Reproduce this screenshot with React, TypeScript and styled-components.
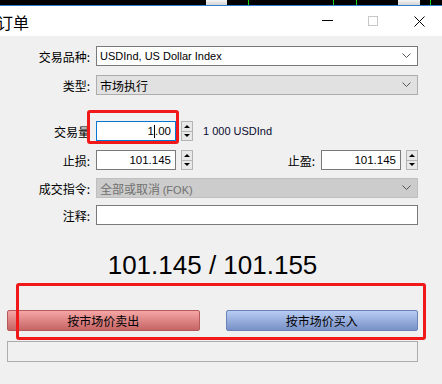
import styled, { createGlobalStyle } from 'styled-components';

const GlobalStyle = createGlobalStyle`
	html, body {
		margin: 0;
		padding: 0;
		background: #f0f0f0;
	}
	body {
		font-family: 'Liberation Sans', 'Noto Sans CJK SC', sans-serif;
		font-size: 12px;
		color: #000;
	}
`;

const Page = styled.div`
	position: relative;
	width: 442px;
	height: 384px;
	overflow: hidden;
	background: #f0f0f0;
`;

const Strip = styled.div`
	height: 5px;
	background: #000;
	border-bottom: 1px solid #2f7fd0;
	display: flex;
`;

const StripItem = styled.div<{ w: number; kind: 'gap' | 'green' | 'gray' }>`
	flex: none;
	width: ${(p) => p.w}px;
	height: 5px;
	background: ${(p) =>
		p.kind === 'green' ? '#18d418' : p.kind === 'gray' ? 'linear-gradient(#f4f4f4, #d4d4d4)' : 'transparent'};
`;

const TitleBar = styled.div`
	height: 30px;
	background: #fff;
	display: flex;
	align-items: center;
`;

const Title = styled.div`
	flex: 1;
	margin-left: -3px;
	font-family: 'Noto Sans CJK SC', sans-serif;
	font-size: 16px;
	line-height: 30px;
	padding-top: 1px;
`;

const WinButton = styled.div`
	width: 46px;
	height: 30px;
	display: flex;
	align-items: center;
	justify-content: center;
`;

const Body = styled.div`
	padding: 10px 24px 0 7px;
	display: flex;
	flex-direction: column;
`;

const Row = styled.div<{ mt?: number }>`
	display: flex;
	align-items: center;
	height: 20px;
	margin-top: ${(p) => p.mt ?? 0}px;
`;

const Label = styled.div<{ w?: number }>`
	width: ${(p) => p.w ?? 83}px;
	padding-right: 6px;
	text-align: right;
	font-family: 'Noto Sans CJK SC', sans-serif;
	font-size: 12px;
	flex: none;
`;

const SelectBox = styled.div<{ variant: 'white' | 'gray' | 'disabled' }>`
	flex: 1;
	height: 20px;
	box-sizing: border-box;
	display: flex;
	align-items: center;
	padding: 0 6px 0 3px;
	border: 1px solid ${(p) => (p.variant === 'white' ? '#7a7a7a' : p.variant === 'gray' ? '#adadad' : '#bfbfbf')};
	background: ${(p) => (p.variant === 'white' ? '#fff' : p.variant === 'gray' ? '#e1e1e1' : '#cccccc')};
	color: ${(p) => (p.variant === 'disabled' ? '#707070' : '#000')};
	font-size: 11px;
`;

const SelectText = styled.span<{ cjk?: boolean }>`
	flex: 1;
	font-size: ${(p) => (p.cjk ? 12 : 11)}px;
	font-family: ${(p) => (p.cjk ? "'Noto Sans CJK SC', sans-serif" : "'Liberation Sans', sans-serif")};
`;

const Latin = styled.span`
	font-family: 'Liberation Sans', sans-serif;
	font-size: 11px;
`;

const NumInput = styled.div<{ focused?: boolean }>`
	width: 80px;
	height: 20px;
	box-sizing: border-box;
	border: 1px solid ${(p) => (p.focused ? '#0078d7' : '#7a7a7a')};
	background: #fff;
	display: flex;
	align-items: center;
	justify-content: flex-end;
	padding-right: 4px;
	font-size: 11.5px;
	flex: none;
`;

const Caret = styled.span`
	display: inline-block;
	width: 1px;
	height: 13px;
	background: #000;
	vertical-align: middle;
`;

const Spinner = styled.div`
	width: 12px;
	height: 20px;
	margin-left: 5px;
	box-sizing: border-box;
	border: 1px solid #b4b4b4;
	background: #e8e8e8;
	display: flex;
	flex-direction: column;
	flex: none;
`;

const SpinHalf = styled.div<{ down?: boolean }>`
	flex: 1;
	display: flex;
	align-items: center;
	justify-content: center;
	border-top: ${(p) => (p.down ? '1px solid #b4b4b4' : 'none')};
	&::after {
		content: '';
		border-left: 3px solid transparent;
		border-right: 3px solid transparent;
		${(p) => (p.down ? 'border-top: 3px solid #000;' : 'border-bottom: 3px solid #000;')}
	}
`;

const Note = styled.span`
	margin-left: 10px;
	font-size: 11px;
	color: #0a0a30;
`;

const Spacer = styled.div`
	flex: 1;
`;

const TextInput = styled.div`
	flex: 1;
	height: 20px;
	box-sizing: border-box;
	border: 1px solid #7a7a7a;
	background: #fff;
`;

const Price = styled.div`
	margin-top: 25px;
	text-align: center;
	font-size: 26px;
	line-height: 30px;
	color: #000;
`;

const ButtonRow = styled.div`
	display: flex;
	gap: 26px;
	margin-top: 30px;
`;

const TradeButton = styled.div<{ side: 'sell' | 'buy' }>`
	flex: 1;
	height: 21px;
	box-sizing: border-box;
	border: 1px solid ${(p) => (p.side === 'sell' ? '#b45a5a' : '#6a82b8')};
	border-radius: 2px;
	background: ${(p) =>
		p.side === 'sell' ? 'linear-gradient(#f6a6a6, #c66464)' : 'linear-gradient(#b8cdf4, #7890c6)'};
	display: flex;
	align-items: center;
	justify-content: center;
	font-family: 'Noto Sans CJK SC', sans-serif;
	font-size: 12px;
	color: #000;
`;

const StatusBox = styled.div`
	margin-top: 10px;
	height: 21px;
	box-sizing: border-box;
	border: 1px solid #adadad;
	background: #f0f0f0;
`;

const Highlight = styled.div<{ x: number; y: number; w: number; h: number }>`
	position: absolute;
	left: ${(p) => p.x}px;
	top: ${(p) => p.y}px;
	width: ${(p) => p.w}px;
	height: ${(p) => p.h}px;
	box-sizing: border-box;
	border: 3px solid #f01818;
	border-radius: 3px;
	pointer-events: none;
`;

const Chevron = () => (
	<svg width="9" height="6" viewBox="0 0 9 6">
		<polyline points="0.5,0.5 4.5,4.5 8.5,0.5" fill="none" stroke="#555" strokeWidth="1" />
	</svg>
);

const SpinButtons = () => (
	<Spinner>
		<SpinHalf />
		<SpinHalf down />
	</Spinner>
);

const strip: [number, 'gap' | 'green' | 'gray'][] = [
	[206, 'gap'],
	[21, 'gray'],
	[21, 'gap'],
	[1, 'green'],
	[84, 'gap'],
	[1, 'green'],
	[22, 'gap'],
	[1, 'green'],
	[41, 'gap'],
	[22, 'gray'],
	[10, 'gap'],
	[1, 'green'],
	[12, 'gap'],
];

export default function App() {
	return (
		<Page>
			<GlobalStyle />
			<Strip>
				{strip.map(([w, kind], i) => (
					<StripItem key={i} w={w} kind={kind} />
				))}
			</Strip>
			<TitleBar>
				<Title>订单</Title>
				<WinButton>
					<svg width="11" height="2" viewBox="0 0 11 2">
						<rect x="0" y="0" width="11" height="1" fill="#000" />
					</svg>
				</WinButton>
				<WinButton>
					<svg width="10" height="10" viewBox="0 0 10 10">
						<rect x="0.5" y="0.5" width="9" height="9" fill="none" stroke="#c8c8c8" />
					</svg>
				</WinButton>
				<WinButton>
					<svg width="11" height="11" viewBox="0 0 11 11">
						<path d="M0.5 0.5 L10.5 10.5 M10.5 0.5 L0.5 10.5" stroke="#000" strokeWidth="1" />
					</svg>
				</WinButton>
			</TitleBar>
			<Body>
				<Row>
					<Label>交易品种:</Label>
					<SelectBox variant="white">
						<SelectText>USDInd, US Dollar Index</SelectText>
						<Chevron />
					</SelectBox>
				</Row>
				<Row mt={9}>
					<Label>类型:</Label>
					<SelectBox variant="gray">
						<SelectText cjk>市场执行</SelectText>
						<Chevron />
					</SelectBox>
				</Row>
				<Row mt={26}>
					<Label>交易量</Label>
					<NumInput focused>
						1<Caret />.00
					</NumInput>
					<SpinButtons />
					<Note>1 000 USDInd</Note>
				</Row>
				<Row mt={9}>
					<Label>止损:</Label>
					<NumInput>101.145</NumInput>
					<SpinButtons />
					<Spacer />
					<Label w={60}>止盈:</Label>
					<NumInput>101.145</NumInput>
					<SpinButtons />
				</Row>
				<Row mt={8}>
					<Label>成交指令:</Label>
					<SelectBox variant="disabled">
						<SelectText cjk>
							全部或取消 <Latin>(FOK)</Latin>
						</SelectText>
						<Chevron />
					</SelectBox>
				</Row>
				<Row mt={7}>
					<Label>注释:</Label>
					<TextInput />
				</Row>
				<Price>101.145 / 101.155</Price>
				<ButtonRow>
					<TradeButton side="sell">按市场价卖出</TradeButton>
					<TradeButton side="buy">按市场价买入</TradeButton>
				</ButtonRow>
				<StatusBox />
			</Body>
			<Highlight x={87} y={110} w={92} h={34} />
			<Highlight x={16} y={283} w={410} h={57} />
		</Page>
	);
}
